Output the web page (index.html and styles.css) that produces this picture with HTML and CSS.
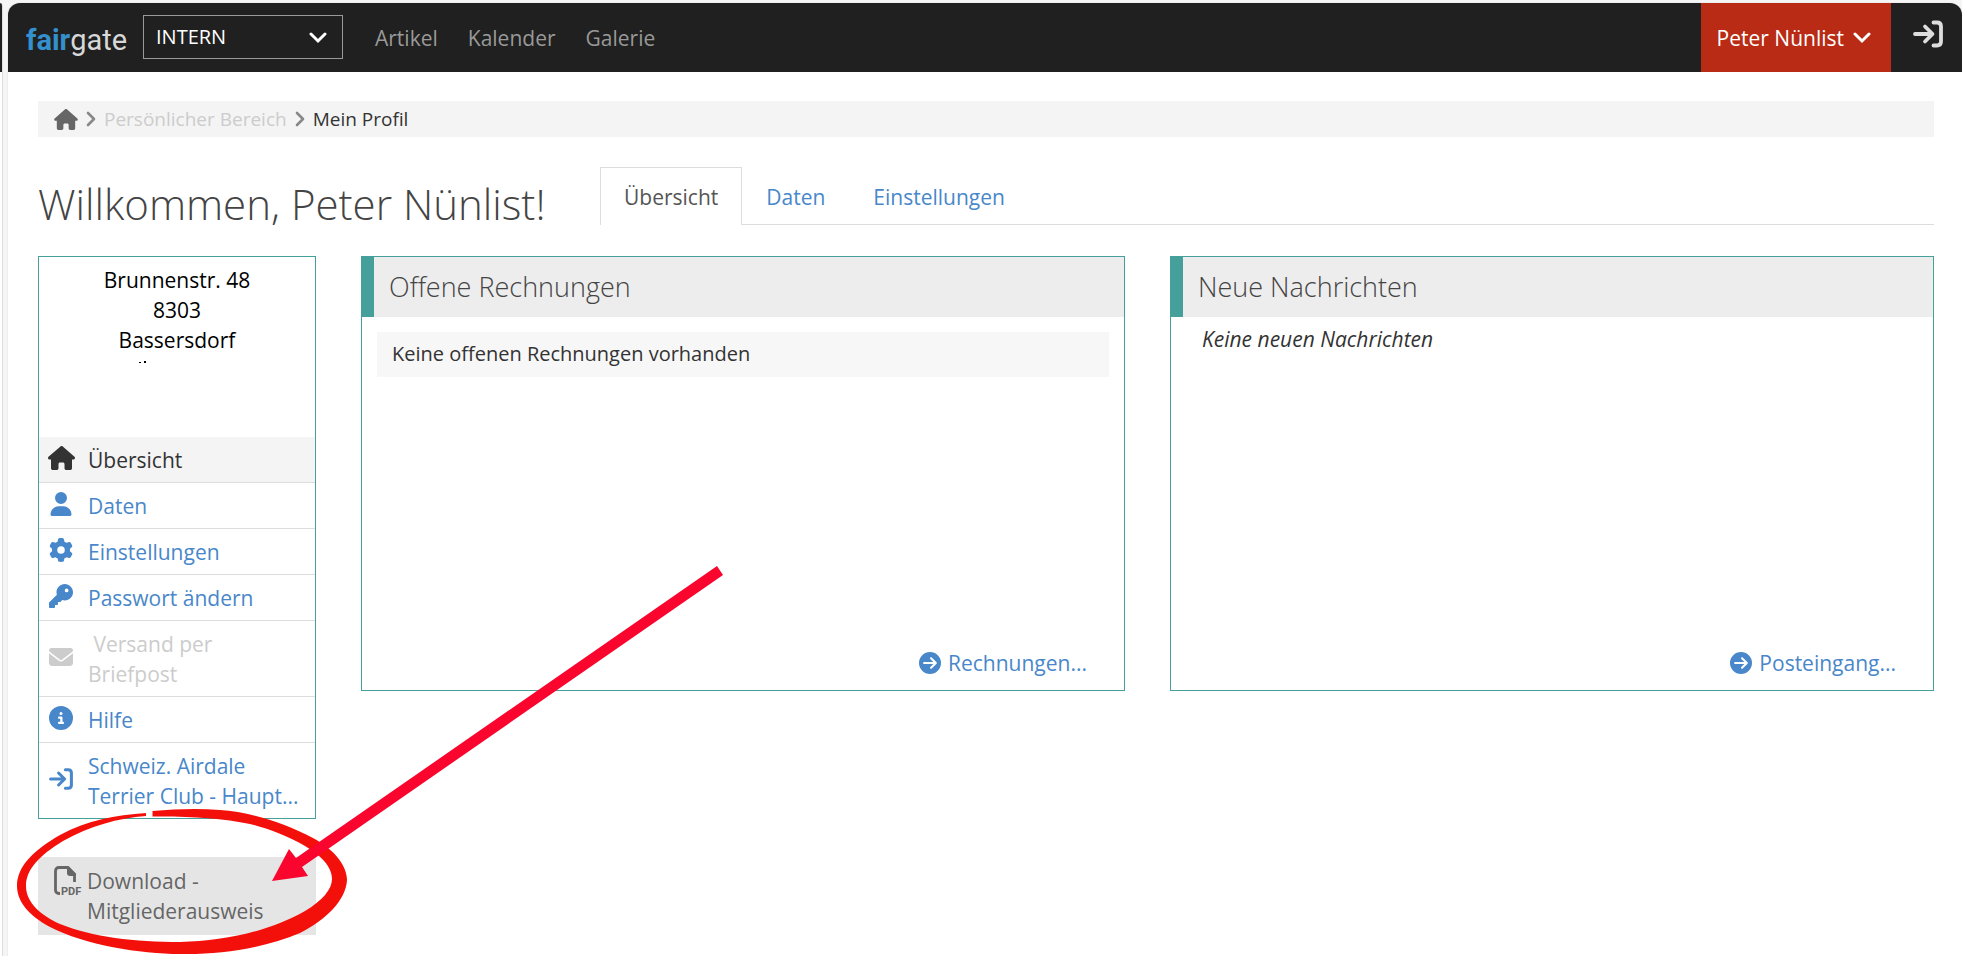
FILE: index.html
```html
<!DOCTYPE html>
<html lang="de">
<head>
<meta charset="utf-8">
<title>Mein Profil</title>
<link rel="stylesheet" href="styles.css">
</head>
<body>
<svg class="sprite" aria-hidden="true">
  <symbol id="house" viewBox="0 0 576 512"><path d="M575.8 255.5c0 18-15 32.1-32 32.1h-32l.7 160.2c0 2.7-.2 5.4-.5 8.1V472c0 22.1-17.9 40-40 40H456c-1.1 0-2.2 0-3.3-.1c-1.4 .1-2.8 .1-4.2 .1H416 392c-22.1 0-40-17.9-40-40V448 384c0-17.7-14.3-32-32-32H256c-17.7 0-32 14.3-32 32v64 24c0 22.1-17.9 40-40 40H160 128.1c-1.5 0-3-.1-4.5-.2c-1.2 .1-2.4 .2-3.6 .2H104c-22.1 0-40-17.9-40-40V360c0-.9 0-1.9 .1-2.8V287.6H32c-18 0-32-14-32-32.1c0-9 3-17 10-24L266.4 8c7-7 15-8 22-8s15 2 21 7L564.8 231.5c8 7 12 15 11 24z"/></symbol>
  <symbol id="user" viewBox="0 0 448 512"><path d="M224 256A128 128 0 1 0 224 0a128 128 0 1 0 0 256zm-45.7 48C79.8 304 0 383.8 0 482.3C0 498.7 13.3 512 29.7 512H418.3c16.4 0 29.7-13.3 29.7-29.7C448 383.8 368.2 304 269.7 304H178.3z"/></symbol>
  <symbol id="gear" viewBox="0 0 512 512"><path d="M495.9 166.6c3.2 8.7 .5 18.4-6.4 24.6l-43.3 39.4c1.1 8.3 1.7 16.8 1.7 25.4s-.6 17.1-1.7 25.4l43.3 39.4c6.9 6.2 9.6 15.9 6.4 24.6c-4.4 11.9-9.7 23.3-15.8 34.3l-4.7 8.1c-6.6 11-14 21.4-22.1 31.2c-5.9 7.2-15.7 9.6-24.5 6.8l-55.7-17.7c-13.4 10.3-28.2 18.9-44 25.4l-12.5 57.1c-2 9.1-9 16.3-18.2 17.8c-13.8 2.3-28 3.5-42.5 3.5s-28.7-1.2-42.5-3.5c-9.2-1.5-16.2-8.7-18.2-17.8l-12.5-57.1c-15.8-6.5-30.6-15.1-44-25.4L83.1 425.9c-8.8 2.8-18.6 .3-24.5-6.8c-8.1-9.8-15.5-20.2-22.1-31.2l-4.7-8.1c-6.1-11-11.4-22.4-15.8-34.3c-3.2-8.7-.5-18.4 6.4-24.6l43.3-39.4C64.6 273.1 64 264.6 64 256s.6-17.1 1.7-25.4L22.4 191.2c-6.9-6.2-9.6-15.9-6.4-24.6c4.4-11.9 9.7-23.3 15.8-34.3l4.7-8.1c6.6-11 14-21.4 22.1-31.2c5.9-7.2 15.7-9.6 24.5-6.8l55.7 17.7c13.4-10.3 28.2-18.9 44-25.4l12.5-57.1c2-9.1 9-16.3 18.2-17.8C227.3 1.2 241.5 0 256 0s28.7 1.2 42.5 3.5c9.2 1.5 16.2 8.7 18.2 17.8l12.5 57.1c15.8 6.5 30.6 15.1 44 25.4l55.7-17.7c8.8-2.8 18.6-.3 24.5 6.8c8.1 9.8 15.5 20.2 22.1 31.2l4.7 8.1c6.1 11 11.4 22.4 15.8 34.3zM256 336a80 80 0 1 0 0-160 80 80 0 1 0 0 160z"/></symbol>
  <symbol id="key" viewBox="0 0 512 512"><path d="M336 352c97.2 0 176-78.8 176-176S433.2 0 336 0S160 78.8 160 176c0 18.7 2.9 36.8 8.3 53.7L7 391c-4.5 4.5-7 10.6-7 17v80c0 13.3 10.7 24 24 24h80c13.3 0 24-10.7 24-24V448h40c13.3 0 24-10.7 24-24V384h40c6.4 0 12.5-2.5 17-7l33.3-33.3c16.9 5.4 35 8.3 53.7 8.3zM376 96a40 40 0 1 1 0 80 40 40 0 1 1 0-80z"/></symbol>
  <symbol id="envelope" viewBox="0 0 512 512"><path d="M48 64C21.500 64 0 85.500 0 112c0 15.100 7.100 29.300 19.200 38.400L236.800 313.600c11.400 8.500 27 8.500 38.400 0L492.800 150.400c12.100-9.100 19.200-23.300 19.200-38.400c0-26.500-21.500-48-48-48H48zM0 176V384c0 35.300 28.700 64 64 64H448c35.300 0 64-28.700 64-64V176L294.400 339.200c-22.800 17.100-54 17.100-76.800 0L0 176z"/></symbol>
  <symbol id="info" viewBox="0 0 512 512"><path d="M256 512A256 256 0 1 0 256 0a256 256 0 1 0 0 512zM216 336h24V272H216c-13.3 0-24-10.7-24-24s10.7-24 24-24h48c13.3 0 24 10.7 24 24v88h8c13.3 0 24 10.7 24 24s-10.7 24-24 24H216c-13.3 0-24-10.7-24-24s10.7-24 24-24zm40-208a32 32 0 1 1 0 64 32 32 0 1 1 0-64z"/></symbol>
  <symbol id="enter" viewBox="0 0 30 30"><path d="M20.500 3.500H24Q28 3.500 28 7.500V22.500Q28 26.500 24 26.500H20.500M2 15H19M12 7.500L19.500 15L12 22.500" fill="none" stroke="currentColor" stroke-width="3.800" stroke-linecap="round" stroke-linejoin="round"/></symbol>
  <symbol id="go" viewBox="0 0 512 512"><path d="M0 256a256 256 0 1 0 512 0A256 256 0 1 0 0 256zM297 385c-9.4 9.4-24.6 9.4-33.9 0s-9.4-24.6 0-33.9l71-71L120 280c-13.3 0-24-10.7-24-24s10.7-24 24-24l214.1 0-71-71c-9.4-9.4-9.4-24.6 0-33.9s24.6-9.4 33.9 0L409 239c9.4 9.4 9.4 24.6 0 33.9L297 385z"/></symbol>
  <symbol id="down" viewBox="0 0 18 12"><path d="M2 2l7 7 7-7" fill="none" stroke="currentColor" stroke-width="3" stroke-linecap="round"/></symbol>
  <symbol id="right" viewBox="0 0 10 16"><path d="M2 2l6 6-6 6" fill="none" stroke="currentColor" stroke-width="2.600" stroke-linecap="round" stroke-linejoin="round"/></symbol>
</svg>

<div class="browser">
  <div class="edge"></div>
  <div class="page">
    <header class="topbar">
      <a class="logo" href="#"><b>fair</b>gate</a>
      <div class="select-wrap">
        <select class="area" aria-label="Bereich"><option>INTERN</option></select>
        <svg class="chevron"><use href="#down"/></svg>
      </div>
      <nav class="mainnav">
        <a href="#">Artikel</a>
        <a href="#">Kalender</a>
        <a href="#">Galerie</a>
      </nav>
      <button class="account" type="button">Peter Nünlist <svg class="chevron"><use href="#down"/></svg></button>
      <button class="logout" type="button" aria-label="Abmelden"><svg><use href="#enter"/></svg></button>
    </header>

    <main class="content">
      <nav class="crumbs" aria-label="Pfad">
        <a href="#" aria-label="Start"><svg class="crumb-home"><use href="#house"/></svg></a>
        <svg class="crumb-sep"><use href="#right"/></svg>
        <span class="crumb-muted">Persönlicher Bereich</span>
        <svg class="crumb-sep"><use href="#right"/></svg>
        <span>Mein Profil</span>
      </nav>

      <div class="heading">
        <h1>Willkommen, Peter Nünlist!</h1>
        <nav class="tabs">
          <a class="tab active" href="#">Übersicht</a>
          <a class="tab" href="#">Daten</a>
          <a class="tab" href="#">Einstellungen</a>
        </nav>
      </div>

      <div class="columns">
        <aside class="side">
          <div class="profile">
            <address>
              Brunnenstr. 48<br>8303<br>Bassersdorf
              <svg class="specks" viewBox="0 0 64 3"><path d="M4 1h2v1H4zM9 0h2v2H9z"/></svg>
            </address>
            <ul class="menu">
              <li class="current"><a href="#"><svg class="wide"><use href="#house"/></svg><span>Übersicht</span></a></li>
              <li><a href="#"><svg><use href="#user"/></svg><span>Daten</span></a></li>
              <li><a href="#"><svg><use href="#gear"/></svg><span>Einstellungen</span></a></li>
              <li><a href="#"><svg><use href="#key"/></svg><span>Passwort ändern</span></a></li>
              <li class="disabled"><a><svg><use href="#envelope"/></svg><span>&nbsp;Versand per<br>Briefpost</span></a></li>
              <li><a href="#"><svg><use href="#info"/></svg><span>Hilfe</span></a></li>
              <li><a href="#"><svg><use href="#enter"/></svg><span>Schweiz. Airdale<br>Terrier Club - Haupt...</span></a></li>
            </ul>
          </div>
          <a class="download" href="#"><svg viewBox="0 0 28 30"><path d="M6 27.500H5Q1.500 27.500 1.500 24V5Q1.500 1.500 5 1.500H14L20.500 8V16" fill="none" stroke="currentColor" stroke-width="2.800"/><path d="M13 1h2l7 7v2h-6q-3 0-3-3z"/><text x="7" y="29" class="pdf-label">PDF</text></svg><span>Download -<br>Mitgliederausweis</span></a>
        </aside>

        <section class="panel">
          <h2>Offene Rechnungen</h2>
          <p class="notice">Keine offenen Rechnungen vorhanden</p>
          <a class="more" href="#"><svg><use href="#go"/></svg>Rechnungen...</a>
        </section>

        <section class="panel">
          <h2>Neue Nachrichten</h2>
          <p class="empty">Keine neuen Nachrichten</p>
          <a class="more" href="#"><svg><use href="#go"/></svg>Posteingang...</a>
        </section>
      </div>
    </main>
  </div>
</div>

<svg class="markup" width="740" height="956" viewBox="0 0 740 956" aria-hidden="true">
  <path class="ring" d="M152.500 811C175 809 198 808 220 810C250 812 285 823 313 838C335 850 347 866 347 880C346 900 326 920 300 933C265 948 220 955 180 954C140 954 85 945 50 927C28 915 17 901 17 886C17 866 34 850 60 835C88 820 115 815 146 813L146 816C118 818 90 826 63 841C40 855 26 869 26 886C26 903 42 916 60 924C92 937 135 942 180 942C225 941 270 931 305 911C323 900 332 889 332 879C332 866 320 855 305 846C286 835 266 828 250 824C222 818 185 816 152.500 816.500Z"/>
  <path class="arrow" d="M717 566L723 575L302 867L308 876L272 881L289 849L296 858Z"/>
</svg>
</body>
</html>
```
FILE: styles.css
```css
* { box-sizing: border-box; }

body {
  margin: 0;
  background: #f5f5f5;
  color: #333;
  font: 20px/30px "Open Sans", "Noto Sans", sans-serif;
}

a { color: #4887c9; text-decoration: none; }
svg { fill: currentColor; flex: none; }
button { border: 0; font: inherit; cursor: pointer; }

.sprite { position: absolute; width: 0; height: 0; }
.pdf-label { font: bold 11px Roboto, sans-serif; }

.browser {
  display: flex;
  gap: 5px;
  min-height: 100vh;
  padding-top: 3px;
}

.edge {
  width: 3px;
  border-right: 1px solid #ddd;
  background: linear-gradient(#202020 69px, #fff 69px);
  border-top-right-radius: 6px;
}

.page {
  flex: 1;
  min-width: 0;
  background: #fff;
  border-radius: 12px 12px 0 0;
  box-shadow: 0 0 1px #aaa;
}

.topbar {
  display: flex;
  align-items: center;
  height: 69px;
  padding-left: 18px;
  background: #202020;
  border-radius: 12px 12px 0 0;
  overflow: hidden;
}

.logo {
  width: 117px;
  padding-top: 4px;
  color: #d8d8d8;
  font: 29px/32px Roboto, sans-serif;
}
.logo b { color: #3490cc; }

.select-wrap { position: relative; margin-bottom: 2px; }
.area {
  display: block;
  width: 200px;
  height: 44px;
  padding: 0 12px;
  appearance: none;
  border: 1px solid #999;
  border-radius: 0;
  background: transparent;
  color: #fff;
  font: inherit;
}
.chevron { width: 18px; height: 12px; }
.select-wrap .chevron {
  position: absolute;
  right: 16px;
  top: 17px;
  color: #fff;
  pointer-events: none;
}

.mainnav { display: flex; gap: 30px; padding: 0 32px; font-size: 21px; }
.mainnav a { color: #999; }

.account {
  display: flex;
  align-items: center;
  gap: 9px;
  height: 100%;
  margin-left: auto;
  padding: 0 20px 0 16px;
  background: #b92b14;
  color: #fff;
  font-size: 21px;
}

.logout {
  height: 100%;
  padding: 0 19px 8px 22px;
  background: transparent;
  color: #ddd;
}
.logout svg { display: block; width: 30px; height: 30px; }

.content { padding: 29px 28px 20px 30px; }

.crumbs {
  display: flex;
  align-items: center;
  gap: 8px;
  height: 36px;
  padding: 0 16px;
  background: #f4f4f4;
  font-size: 19px;
}
.crumbs a { display: flex; color: #666; }
.crumb-home { width: 24px; height: 21px; }
.crumb-sep { width: 10px; height: 16px; color: #888; }
.crumb-muted { color: #ccc; }

.heading {
  display: flex;
  align-items: flex-end;
  justify-content: space-between;
  margin-top: 30px;
}

h1 {
  flex: none;
  width: 562px;
  margin: 0;
  color: #444;
  font-size: 42px;
  font-weight: 300;
  line-height: 42px;
}

.tabs {
  display: flex;
  flex: 1;
  border-bottom: 1px solid #ddd;
  font-size: 21px;
}
.tab {
  height: 58px;
  margin-bottom: -1px;
  padding: 14px 23px 13px;
  border: 1px solid transparent;
  border-bottom: 0;
}
.tab.active { border-color: #ddd; background: #fff; color: #555; }

.columns {
  display: grid;
  grid-template-columns: 278px 1fr 1fr;
  gap: 45px;
  align-items: start;
  margin-top: 31px;
}

.profile { border: 1px solid #45a09b; }

address {
  height: 180px;
  padding-top: 8px;
  color: #000;
  font-style: normal;
  font-size: 21px;
  text-align: center;
}
.specks { display: block; width: 64px; height: 3px; margin: 6px auto 0 96px; }

.menu { margin: 0; padding: 0; list-style: none; font-size: 21px; }
.menu li + li { border-top: 1px solid #ddd; }
.menu a { display: flex; align-items: center; padding: 8px 0 7px 10px; }
.menu svg { width: 24px; height: 24px; margin: -4px 15px 0 0; }
.menu .wide { width: 27px; margin: -4px 13px 0 -1px; }
.menu .current { background: #f4f4f4; }
.menu .current a { color: #333; }
.menu .disabled a { color: #ccc; }

.download {
  display: flex;
  margin-top: 38px;
  padding: 9px 16px;
  background: #e5e5e5;
  color: #666;
  font-size: 21px;
}
.download svg { width: 28px; height: 30px; margin-right: 5px; }

.panel {
  display: flex;
  flex-direction: column;
  min-height: 435px;
  border: 1px solid #45a09b;
}
.panel h2 {
  margin: 0;
  padding: 15px;
  border-left: 12px solid #45a09b;
  background: #ededed;
  color: #444;
  font-size: 27px;
  font-weight: 300;
  line-height: 30px;
}
.notice {
  margin: 15px;
  padding: 7px 15px 8px;
  background: #f7f7f7;
}
.empty { margin: 7px 31px; font-size: 21px; font-style: italic; }
.more {
  display: flex;
  align-items: center;
  gap: 7px;
  margin: auto 37px 12px auto;
  font-size: 21px;
}
.more svg { width: 22px; height: 22px; }

.markup { position: absolute; left: 0; top: 0; pointer-events: none; }
.ring { fill: #f4100a; }
.arrow { fill: #f9052e; }
```
